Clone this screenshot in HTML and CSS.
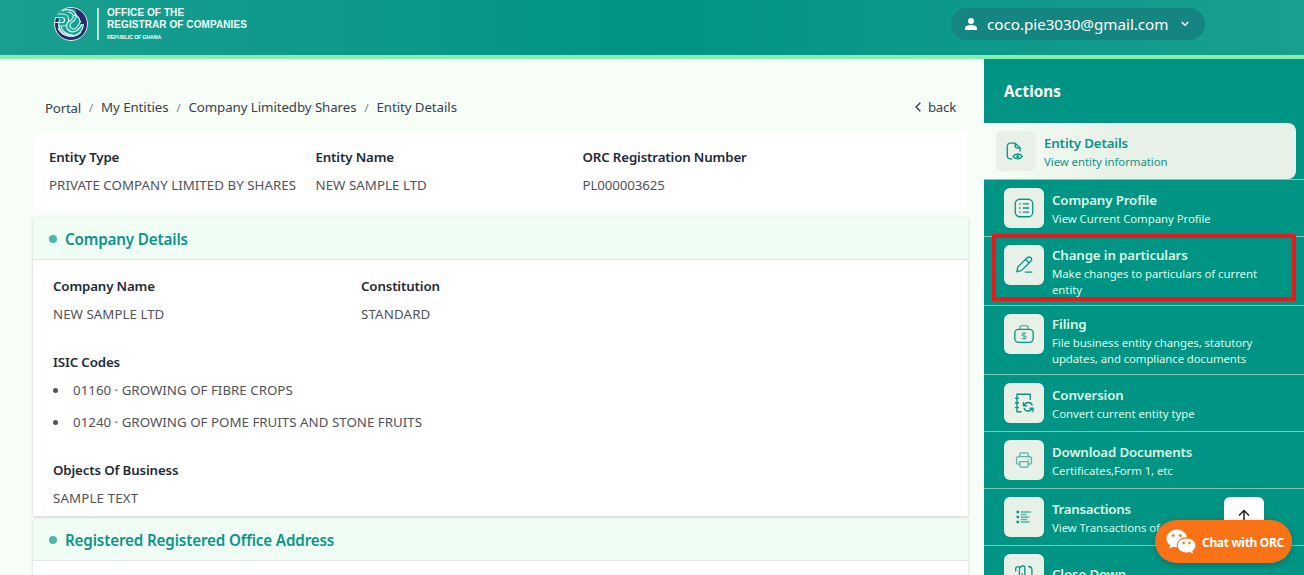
FILE: index.html
```html
<!DOCTYPE html>
<html lang="en">
<head>
<meta charset="utf-8">
<title>Entity Details</title>
<link rel="stylesheet" href="styles.css">
</head>
<body>
<header class="topbar">
  <div class="brand">
    <svg class="brand-mark" viewBox="0 0 34 34" fill="none">
      <circle cx="17" cy="17" r="14.600" stroke="#2b2a6c" stroke-width="4"/>
      <circle cx="17" cy="17" r="16.500" stroke="#d5f0ec"/>
      <circle cx="17" cy="17" r="12.200" fill="#12a391" stroke="#d5f0ec" stroke-width="1.200"/>
      <path d="M1 11C4 4 11 1 17 1.500C24 2 26 9 22 13L13 14Z" fill="#12a391"/>
      <path d="M20 4C27 5 31 11 30 17H26C26 11 24 8 20 4Z" fill="#2b2a6c"/>
      <path d="M1 10.500H8C11.500 10.500 11.500 15.500 8 15.500H1M4 7H9C16.500 7 16.500 19 9 19H4M8 4C20 -1 28 10 17 16C14 20 19 25 23 20L27 14M14 5C20 6 22 11 14 15C10 20 15 27 22 24C25 22 27 20 28 17M4 21C8 30 20 32 27 25M7 20C9 26 14 28 19 28M20 8C24 9 26 12 26 15" stroke="#d5f5f0" stroke-width="1.200"/>
    </svg>
    <div class="brand-text">
      <div class="brand-line">OFFICE OF THE</div>
      <div class="brand-line">REGISTRAR OF COMPANIES</div>
      <div class="brand-sub">REPUBLIC OF GHANA</div>
    </div>
  </div>
  <div class="user">
    <svg class="user-icon" viewBox="0 0 12 12" fill="#fff"><circle cx="6" cy="3" r="3"/><path d="M0 12V10.300C0 8 3 7 6 7S12 8 12 10.300V12Z"/></svg>
    <span>coco.pie3030@gmail.com</span>
    <svg class="user-chevron" viewBox="0 0 8 6" fill="none" stroke="#fff" stroke-width="1.500"><path d="M.7 1L4 4.300L7.300 1"/></svg>
  </div>
</header>
<div class="layout">
  <main class="main">
    <nav class="crumbs">
      <span class="crumb-root">Portal</span><i>/</i><span>My Entities</span><i>/</i><span>Company Limitedby Shares</span><i>/</i><span>Entity Details</span>
      <a class="back"><svg viewBox="0 0 6 10" fill="none" stroke="#374151" stroke-width="1.500"><path d="M5.300 .7L1 5L5.300 9.300"/></svg><span>back</span></a>
    </nav>
    <section class="summary">
      <div><h3>Entity Type</h3><p>PRIVATE COMPANY LIMITED BY SHARES</p></div>
      <div><h3>Entity Name</h3><p>NEW SAMPLE LTD</p></div>
      <div><h3>ORC Registration Number</h3><p class="code">PL000003625</p></div>
    </section>
    <section class="panel">
      <h2><b class="dot"></b>Company Details</h2>
      <div class="panel-body">
        <div class="pair">
          <div class="field"><h3>Company Name</h3><p>NEW SAMPLE LTD</p></div>
          <div class="field"><h3>Constitution</h3><p class="wide">STANDARD</p></div>
        </div>
        <div class="field">
          <h3>ISIC Codes</h3>
          <ul>
            <li>01160 · GROWING OF FIBRE CROPS</li>
            <li>01240 · GROWING OF POME FRUITS AND STONE FRUITS</li>
          </ul>
        </div>
        <div class="field"><h3>Objects Of Business</h3><p class="wide">SAMPLE TEXT</p></div>
      </div>
    </section>
    <section class="panel">
      <h2><b class="dot"></b>Registered Registered Office Address</h2>
      <div class="panel-body empty"></div>
    </section>
  </main>
  <aside class="actions">
    <h1>Actions</h1>
    <div class="row"><a class="item active">
      <span class="tile"><svg viewBox="2.500 0 24 24"><path d="M10 21.500H8C5 21.500 4 20.500 4 17V7C4 3.500 5.500 2.500 8 2.500H13.500L19.500 8.500V12.500M13.500 2.500V5.500C13.500 7.800 14.500 8.500 16.500 8.500H19.500M11 18.500C13.500 14.600 19.500 14.600 22 18.500C19.500 22.400 13.500 22.400 11 18.500Z"/><circle cx="16.500" cy="18.500" r="1"/></svg></span>
      <span class="label"><strong>Entity Details</strong><small>View entity information</small></span></a></div>
    <div class="row"><a class="item">
      <span class="tile"><svg viewBox="0 0 24 24"><rect x="1.500" y="1.500" width="21" height="21" rx="5.500"/><path d="M6 7H7.800M10.500 7H18M6 12H7.800M10.500 12H18M6 17H7.800M10.500 17H18"/></svg></span>
      <span class="label"><strong>Company Profile</strong><small>View Current Company Profile</small></span></a></div>
    <div class="row"><a class="item">
      <span class="tile"><svg viewBox="0 0 24 24"><path d="M3.500 20L4.500 14.500L15.800 3.300C18.800 .8 23 4.500 20.200 7.600L8.700 18.800ZM13.800 5.300L18.300 9.700M13 20.500H22"/></svg></span>
      <span class="label"><strong>Change in particulars</strong><small>Make changes to particulars of current<br>entity</small></span></a></div>
    <div class="row"><a class="item">
      <span class="tile"><svg viewBox="0 0 24 24"><rect x="1" y="6.500" width="22" height="15.500" rx="4.500"/><path class="soft" d="M7 6.500V5C7 3 8 2 10 2H14C16 2 17 3 17 5V6.500M14.500 11.500C13.500 10.300 9.500 10.300 9.500 12.500C9.500 15 14.500 13.700 14.500 16.200C14.500 18.400 10.300 18.300 9.300 17M12 9.800V19"/></svg></span>
      <span class="label tight"><strong>Filing</strong><small>File business entity changes, statutory<br>updates, and compliance documents</small></span></a></div>
    <div class="row"><a class="item">
      <span class="tile"><svg viewBox="0 0 24 24"><path d="M19.500 8.500V1.500H3.500V22.500H9M1 6.500H6M1 12H6M1 17.500H6M12 15C13.500 10.500 20.500 10 22 15M22 18C20.500 22.500 13.500 23 12 18M11.300 11V15.300H15.500M22.800 23V18.300H18.500"/></svg></span>
      <span class="label"><strong>Conversion</strong><small>Convert current entity type</small></span></a></div>
    <div class="row"><a class="item">
      <span class="tile"><svg viewBox="0 0 24 24" class="soft"><path d="M7 8V5.500C7 4 7.500 3.500 9 3.500H15C16.500 3.500 17 4 17 5.500V8M6.500 17H5C3.500 17 3 16 3 15V11C3 9 4 8 5.500 8H18.500C20 8 21 9 21 11V15C21 16 20.500 17 19 17H17.500M16.500 11.500H18M7 14H17V18C17 19.500 16.300 20.500 15 20.500H9C7.700 20.500 7 19.500 7 18Z"/></svg></span>
      <span class="label tight"><strong>Download Documents</strong><small>Certificates,Form 1, etc</small></span></a></div>
    <div class="row"><a class="item">
      <span class="tile"><svg viewBox="0 0 24 24"><path class="soft" stroke-width="1.600" d="M8 6H20.500M8 9H15M8 12H18.500M8 15H16M8 18H19"/><path stroke-width="3" d="M3 6H6M3 12H6M3 18H6"/></svg></span>
      <span class="label trans"><strong>Transactions</strong><small>View Transactions of</small></span></a></div>
    <div class="row"><a class="item">
      <span class="tile"><svg viewBox="0 0 24 24"><path d="M2 9V6C2 4 3 3.500 4 3.500H8M6.500 19V6.500C6.500 4 8 3.500 9.500 2.500C12 1.500 13 2.500 13 5V19M10 11V13M17 3C20 3 21.500 4 21.500 7V16"/></svg></span>
      <span class="label"><strong>Close Down</strong></span></a></div>
  </aside>
</div>
<div class="highlight"></div>
<div class="to-top"><svg viewBox="0 0 12 14" fill="none" stroke="#222" stroke-width="1.500"><path d="M6 13V1.500M1 6.500L6 1.500L11 6.500"/></svg></div>
<div class="chat">
  <svg viewBox="0 0 30 25"><path fill="#fff" d="M11 .5C4.800 .5 .5 4.500 .5 9.500C.5 12.400 2 14.800 4.300 16.400L3.300 19.600L7.200 17.700C8.500 18.100 9.800 18.300 11 18.300C9.700 12.500 14.500 8 21 8.200C20 3.700 16 .5 11 .5Z"/><path fill="#fff" d="M20.500 9.500C15.300 9.500 11.800 12.700 11.800 16.500C11.800 20.400 15.500 23.400 20.500 23.400C21.700 23.400 22.800 23.200 23.800 22.900L27 24.600L26.200 21.800C28.200 20.500 29.400 18.600 29.400 16.500C29.400 12.600 25.600 9.500 20.500 9.500Z"/><g fill="#f97316"><circle cx="7.300" cy="6.600" r="1.400"/><circle cx="14.300" cy="6.600" r="1.400"/><circle cx="17.700" cy="14" r="1.200"/><circle cx="23.500" cy="14" r="1.200"/></g></svg>
  <span>Chat with ORC</span>
</div>
</body>
</html>
```
FILE: styles.css
```css
* { box-sizing: border-box; }
body { margin: 0; height: 575px; overflow: hidden; background: #f7fdf7; font-family: "Noto Sans", "Open Sans", sans-serif; font-size: 13.3px; color: #374151; }
h1, h2, h3, p, ul { margin: 0; padding: 0; }
.topbar { height: 59px; border-bottom: 4px solid #86efac; background: linear-gradient(90deg, #1a9f90 0%, #009485 50%, #1a9f90 100%); display: flex; justify-content: space-between; padding: 0 99px 0 53.5px; }
.brand { display: flex; padding-top: 7px; }
.brand-mark { width: 34px; height: 34px; }
.brand-text { margin: 1px 0 0 9.5px; border-left: 2px solid #b5e0d9; height: 32px; padding-left: 8px; color: #f4fffc; font-family: "Liberation Sans", Arial, sans-serif; font-weight: 700; }
.brand-line { font-size: 10px; line-height: 11.7px; letter-spacing: .08px; white-space: nowrap; }
.brand-line:first-child { margin-top: -1px; }
.brand-sub { font-size: 5.2px; line-height: 6px; margin-top: 3.5px; letter-spacing: -.09px; white-space: nowrap; }
.user { margin-top: 8px; width: 254px; height: 32px; border-radius: 16px; background: #158581; color: #fff; font-size: 15.2px; letter-spacing: -.02px; display: flex; align-items: center; padding: 0 16px 0 14px; }
.user-icon { width: 12px; height: 12px; margin-right: 10px; }
.user-chevron { width: 8px; height: 6px; margin-left: auto; }
.layout { display: grid; grid-template-columns: 1fr 320px; height: 516px; overflow: hidden; }
.main { padding: 0 16px 0 33px; }
.crumbs { height: 72px; padding: 24px 12px 0 12px; display: flex; align-items: center; white-space: nowrap; letter-spacing: -.08px; }
.crumb-root { padding-top: 1px; letter-spacing: -.2px; }
.crumbs i { font-style: normal; font-size: 11px; color: #7b828c; width: 20px; text-align: center; }
.back { margin-left: auto; display: flex; align-items: center; gap: 7px; letter-spacing: -.25px; }
.back svg { width: 6px; height: 10px; }
h3 { font-size: 13.3px; font-weight: 600; line-height: 20px; color: #1f2937; letter-spacing: -.15px; }
p, li { line-height: 20px; color: #52525b; letter-spacing: .035px; }
p { margin-top: 8px; }
li { letter-spacing: .02px; }
.code { letter-spacing: -.1px; }
.wide { letter-spacing: .15px; }
.summary { height: 80px; background: #fff; border-radius: 4px; padding: 16px; display: grid; grid-template-columns: 266.5px 267px 1fr; white-space: nowrap; }
.panel { margin-top: 7px; background: #fff; box-shadow: 0 1px 3px rgba(0,0,0,.18); }
.panel + .panel { margin-top: 3px; }
.panel h2 { height: 42px; background: #f0fdf5; border-bottom: 1px solid #e0e7e5; display: flex; align-items: center; padding-left: 16px; font-size: 15.2px; font-weight: 600; color: #0d9488; letter-spacing: -.15px; }
.dot { width: 8px; height: 8px; border-radius: 50%; background: #4db6a9; margin-right: 8px; }
.panel-body { padding: 16px 20px 8px; }
.empty { height: 60px; }
.pair { display: grid; grid-template-columns: 308px 1fr; }
.field + .field { margin-top: 28px; }
.pair .field + .field { margin-top: 0; }
.pair + .field { margin-top: 28px; }
ul { list-style: none; }
li { margin-top: 8px; display: flex; align-items: center; }
li + li { margin-top: 12px; }
li::before { content: ""; width: 5px; height: 5px; border-radius: 50%; background: #52525b; margin-right: 15px; }
.actions { background: #009485; }
.actions h1 { height: 64px; line-height: 65px; padding-left: 20px; font-size: 15.2px; font-weight: 700; color: #fff; letter-spacing: .07px; }
.row { border-bottom: 1px solid #7bc8bf; }
.item { display: flex; gap: 8px; padding: 8px 20px; min-height: 56px; color: #dcfce7; }
.item.active { margin-right: 8px; padding-left: 12px; border-radius: 0 8px 8px 0; background: linear-gradient(90deg, #f7fdf7, #e8f1e8 42%); color: #0d9488; }
.tile { flex: none; width: 40px; height: 40px; border-radius: 6px; background: #e8f1e8; display: flex; align-items: center; justify-content: center; }
.tile svg { width: 20px; height: 20px; fill: none; stroke: #0d9488; stroke-width: 1.6; }
.soft { opacity: .65; }
.label { align-self: center; white-space: nowrap; }
.label strong { display: block; font-size: 13.3px; font-weight: 600; line-height: 20px; letter-spacing: -.14px; }
.label small { display: block; font-size: 11.4px; line-height: 16px; letter-spacing: -.055px; padding-top: 1px; margin-bottom: -1px; }
.tight small { letter-spacing: -.09px; }
.trans strong { letter-spacing: -.28px; }
.highlight { position: absolute; left: 992px; top: 234px; width: 304px; height: 67px; border: 4px solid #e81b1b; }
.to-top { position: absolute; left: 1224px; top: 497px; width: 40px; height: 40px; border-radius: 6px; background: #fff; display: flex; justify-content: center; padding-top: 12px; box-shadow: 0 0 20px rgba(0,0,0,.06); }
.to-top svg { width: 12px; height: 14px; }
.chat { position: absolute; left: 1155px; top: 520px; width: 137px; height: 43px; border-radius: 22px; background: #f97316; color: #fff; font-size: 12px; font-weight: 700; letter-spacing: -.32px; display: flex; align-items: center; gap: 6.5px; padding: 0 0 0 10.5px; box-shadow: 0 2px 6px rgba(0,0,0,.2); white-space: nowrap; }
.chat span { padding-top: 2px; }
.chat svg { width: 30px; height: 25px; }
```
